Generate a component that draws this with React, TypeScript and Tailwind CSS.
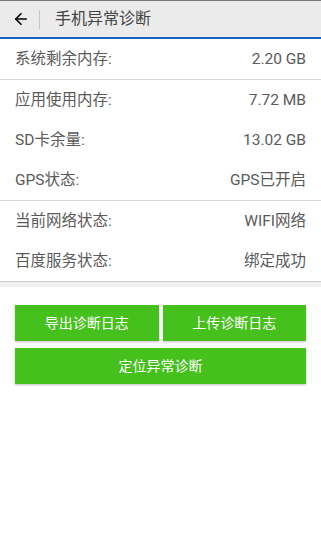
import { ArrowLeft } from 'lucide-react';

const font = { fontFamily: 'Roboto, "Noto Sans CJK SC", sans-serif' };

const Row = ({ label, value }: { label: string; value: string }) => (
  <div className="h-[39px] px-[15px] flex items-center justify-between text-[15.5px] text-[#5a5a5a]">
    <span>{label}</span>
    <span>{value}</span>
  </div>
);

const App = () => {
  return (
    <div className="w-[321px] h-[550px] bg-white" style={font}>
      <div className="h-[1px] bg-[#777]" />
      <div className="h-[36px] bg-[#ebebeb] flex items-center">
        <ArrowLeft className="ml-[12px] w-[18px] h-[18px] text-black" strokeWidth={2.2} />
        <div className="ml-[9px] w-px h-[19px] bg-[#c8c8c8]" />
        <span className="ml-[15px] text-[16px] text-[#444]">手机异常诊断</span>
      </div>
      <div className="h-[2px] bg-[#1565c0]" />

      <div className="pt-px">
        <Row label="系统剩余内存:" value="2.20 GB" />
        <div className="h-px bg-[#d6d6d6]" />
        <div className="h-[1px]" />
        <Row label="应用使用内存:" value="7.72 MB" />
        <div className="h-[1px]" />
        <Row label="SD卡余量:" value="13.02 GB" />
        <div className="h-[1px]" />
        <Row label="GPS状态:" value="GPS已开启" />
        <div className="h-px bg-[#d6d6d6]" />
        <div className="h-[1px]" />
        <Row label="当前网络状态:" value="WIFI网络" />
        <div className="h-[1px]" />
        <Row label="百度服务状态:" value="绑定成功" />
        <div className="h-px bg-[#cfcfcf]" />
        <div className="h-[5px] bg-[#f0f0f2]" />
      </div>

      <div className="px-[15px] pt-[18px] flex flex-col gap-[7px]">
        <div className="flex gap-[4px]">
          <button className="flex-1 h-[36px] bg-[#46c01d] text-white text-[14px] shadow-[0_1px_2px_rgba(0,0,0,0.25)]">
            导出诊断日志
          </button>
          <button className="flex-1 h-[36px] bg-[#46c01d] text-white text-[14px] shadow-[0_1px_2px_rgba(0,0,0,0.25)]">
            上传诊断日志
          </button>
        </div>
        <button className="w-full h-[36px] bg-[#46c01d] text-white text-[14px] shadow-[0_1px_2px_rgba(0,0,0,0.25)]">
          定位异常诊断
        </button>
      </div>
    </div>
  );
};

export default App;
